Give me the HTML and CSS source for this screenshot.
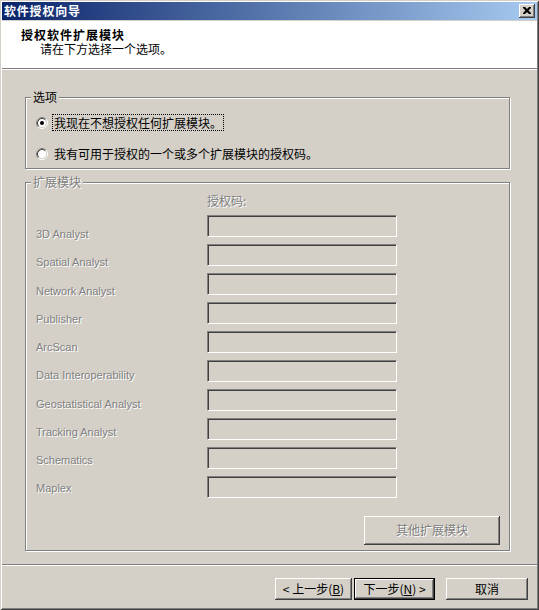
FILE: index.html
```html
<!DOCTYPE html>
<html lang="zh-CN">
<head>
<meta charset="utf-8">
<title>软件授权向导</title>
<link rel="stylesheet" href="styles.css">
</head>
<body>
<div class="window">
  <div class="titlebar">
    <span class="title">软件授权向导</span>
    <span class="close">
      <svg width="8" height="7" viewBox="0 0 8 7"><path d="M0 0h2l2 2 2-2h2v1l-2.5 2.5 2.5 2.5v1h-2l-2-2-2 2h-2v-1l2.5-2.5-2.5-2.5z" fill="#000"/></svg>
    </span>
  </div>
  <div class="header">
    <div class="h-title">授权软件扩展模块</div>
    <div class="h-sub">请在下方选择一个选项。</div>
  </div>
  <div class="body">
    <fieldset class="group g-options">
      <legend>选项</legend>
      <div class="options">
        <div class="radio-row">
          <svg class="radio" width="12" height="12" viewBox="0 0 12 12">
            <circle cx="6" cy="6" r="4.5" fill="#fff"/>
            <path d="M2.11 9.89A5.5 5.5 0 0 1 9.89 2.11" fill="none" stroke="#808080"/>
            <path d="M9.89 2.11A5.5 5.5 0 0 1 2.11 9.89" fill="none" stroke="#fff"/>
            <path d="M2.82 9.18A4.5 4.5 0 0 1 9.18 2.82" fill="none" stroke="#404040"/>
            <path d="M9.18 2.82A4.5 4.5 0 0 1 2.82 9.18" fill="none" stroke="#d4d0c8"/>
            <circle cx="6" cy="6" r="2" fill="#000"/>
          </svg>
          <span class="rtext focus">我现在不想授权任何扩展模块。</span>
        </div>
        <div class="radio-row second">
          <svg class="radio" width="12" height="12" viewBox="0 0 12 12">
            <circle cx="6" cy="6" r="4.5" fill="#fff"/>
            <path d="M2.11 9.89A5.5 5.5 0 0 1 9.89 2.11" fill="none" stroke="#808080"/>
            <path d="M9.89 2.11A5.5 5.5 0 0 1 2.11 9.89" fill="none" stroke="#fff"/>
            <path d="M2.82 9.18A4.5 4.5 0 0 1 9.18 2.82" fill="none" stroke="#404040"/>
            <path d="M9.18 2.82A4.5 4.5 0 0 1 2.82 9.18" fill="none" stroke="#d4d0c8"/>
          </svg>
          <span class="rtext">我有可用于授权的一个或多个扩展模块的授权码。</span>
        </div>
      </div>
    </fieldset>
    <fieldset class="group g-ext">
      <legend class="dis">扩展模块</legend>
      <div class="ext">
        <div class="labels">
          <div class="ext-label dis">3D Analyst</div>
          <div class="ext-label dis">Spatial Analyst</div>
          <div class="ext-label dis">Network Analyst</div>
          <div class="ext-label dis">Publisher</div>
          <div class="ext-label dis">ArcScan</div>
          <div class="ext-label dis">Data Interoperability</div>
          <div class="ext-label dis">Geostatistical Analyst</div>
          <div class="ext-label dis">Tracking Analyst</div>
          <div class="ext-label dis">Schematics</div>
          <div class="ext-label dis">Maplex</div>
        </div>
        <div class="codes">
          <div class="code-head dis">授权码:</div>
          <div class="tb"></div>
          <div class="tb"></div>
          <div class="tb"></div>
          <div class="tb"></div>
          <div class="tb"></div>
          <div class="tb"></div>
          <div class="tb"></div>
          <div class="tb"></div>
          <div class="tb"></div>
          <div class="tb"></div>
        </div>
      </div>
      <div class="more-row">
        <span class="btn more dis">其他扩展模块</span>
      </div>
    </fieldset>
  </div>
  <div class="footer">
    <span class="btn back">&lt; 上一步(<u>B</u>)</span>
    <span class="btn next default">下一步(<u>N</u>) &gt;</span>
    <span class="btn cancel">取消</span>
  </div>
</div>
</body>
</html>
```

FILE: styles.css
```css
html, body {
  margin: 0;
  padding: 0;
}
body {
  background: #d4d0c8;
  font-family: "Noto Sans CJK SC", "Liberation Sans", sans-serif;
  font-size: 12px;
  line-height: 14px;
  color: #000;
}
.window {
  width: 539px;
  height: 610px;
  box-sizing: border-box;
  padding: 2px;
  background: #d4d0c8;
  box-shadow: inset 1px 1px #d4d0c8, inset -1px -1px #404040, inset 2px 2px #fff, inset -2px -2px #808080;
  display: flex;
  flex-direction: column;
}
.titlebar {
  height: 18px;
  margin-bottom: 1px;
  background: linear-gradient(to right, #0a246a, #a6caf0);
  display: flex;
  align-items: center;
  justify-content: space-between;
  padding: 0 2px;
  flex: none;
}
.title {
  color: #fff;
  font-weight: bold;
  letter-spacing: 0.8px;
  line-height: 14px;
}
.close {
  width: 16px;
  height: 14px;
  box-sizing: border-box;
  background: #d4d0c8;
  box-shadow: inset -1px -1px #404040, inset 1px 1px #fff, inset -2px -2px #808080;
  display: flex;
  align-items: center;
  justify-content: center;
  padding: 0 1px 1px 0;
}
.header {
  box-sizing: border-box;
  height: 48px;
  background: #fff;
  border-bottom: 1px solid #808080;
  box-shadow: 0 1px #fff;
  margin-bottom: 1px;
  padding: 7px 0 0 19px;
  flex: none;
}
.h-title {
  font-weight: bold;
  letter-spacing: 1px;
  line-height: 14px;
}
.h-sub {
  padding-left: 19px;
  line-height: 13px;
}
.body {
  height: 494px;
  box-sizing: border-box;
  padding: 20px 27px 0 23px;
  flex: none;
}
.group {
  margin: 0;
  padding: 0;
  border: 1px solid #808080;
  box-shadow: inset 1px 1px #fff, 1px 1px #fff;
  min-width: 0;
}
.group legend {
  margin-left: 5px;
  padding: 0 2px;
  line-height: 14px;
  background: #d4d0c8;
}
.dis {
  color: #808080;
  text-shadow: 1px 1px #fff;
}
.options {
  padding: 10px 0 6px 10px;
}
.radio-row {
  display: flex;
  align-items: center;
  height: 17px;
}
.radio-row.second {
  margin-top: 14px;
}
.radio {
  flex: none;
  margin-right: 4px;
}
.rtext {
  border: 1px solid transparent;
  padding: 0 1px;
  line-height: 15px;
}
.rtext.focus {
  border: 1px dotted #000;
}
.g-ext {
  margin-top: 6px;
}
.ext {
  display: flex;
  padding: 5px 0 0 10px;
}
.labels {
  width: 171px;
  padding-top: 26px;
  font-family: "Liberation Sans", sans-serif;
  font-size: 11px;
}
.ext-label {
  line-height: 28.25px;
}
.codes {
  width: 190px;
  display: flex;
  flex-direction: column;
  gap: 7px;
}
.code-head {
  line-height: 14px;
}
.tb {
  box-sizing: border-box;
  height: 22px;
  background: #d4d0c8;
  border-top: 1px solid #808080;
  border-left: 1px solid #808080;
  border-right: 1px solid #fff;
  border-bottom: 1px solid #fff;
  box-shadow: inset 1px 1px #404040, inset -1px -1px #d4d0c8;
}
.more-row {
  display: flex;
  justify-content: flex-end;
  padding: 13px 9px 5px 0;
}
.btn {
  box-sizing: border-box;
  display: flex;
  align-items: center;
  justify-content: center;
  background: #d4d0c8;
  box-shadow: inset -1px -1px #404040, inset 1px 1px #fff, inset -2px -2px #808080;
  font-size: 12px;
  line-height: 14px;
  white-space: nowrap;
}
.btn u {
  text-decoration: underline;
}
.more {
  width: 136px;
  height: 29px;
}
.footer {
  flex: 1;
  border-top: 1px solid #808080;
  box-shadow: inset 0 1px #fff;
  display: flex;
  justify-content: flex-end;
  align-items: flex-start;
  padding: 13px 9px 0 0;
}
.footer .btn {
  height: 22px;
}
.back {
  width: 77px;
  margin-right: 2px;
}
.next {
  width: 81px;
  margin-right: 11px;
}
.default {
  border: 1px solid #000;
}
.cancel {
  width: 82px;
}
```
